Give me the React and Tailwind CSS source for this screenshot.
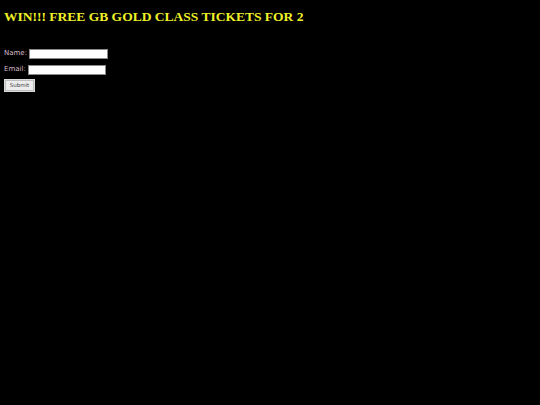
export default function App() {
  return (
    <div className="min-h-[405px] bg-black px-1 pt-[8.5px] font-['DejaVu_Sans',sans-serif]">
      <h1 className="font-['Liberation_Serif',serif] text-[13.5px] leading-[16px] font-bold text-[#f0f028]">
        WIN!!! FREE GB GOLD CLASS TICKETS FOR 2
      </h1>

      <form className="mt-[21px] flex flex-col items-start" onSubmit={(e) => e.preventDefault()}>
        <label className="flex h-[16px] items-center gap-[2px] text-[7px] text-[#d6b9c9]">
          Name:
          <input
            type="text"
            className="h-[10px] w-[79px] border border-[#8a8a8a] bg-white"
          />
        </label>
        <label className="flex h-[16px] items-center gap-[2px] text-[7px] text-[#d6b9c9]">
          Email:
          <input
            type="text"
            className="h-[10px] w-[78px] border border-[#8a8a8a] bg-white"
          />
        </label>
        <button
          type="submit"
          className="mt-[1.5px] h-[13px] w-[31px] border border-[#dadada] bg-[#ececec] text-[5.5px] leading-none text-[#444] shadow-[inset_0_0_0_1px_#bdbdbd]"
        >
          Submit
        </button>
      </form>
    </div>
  )
}
